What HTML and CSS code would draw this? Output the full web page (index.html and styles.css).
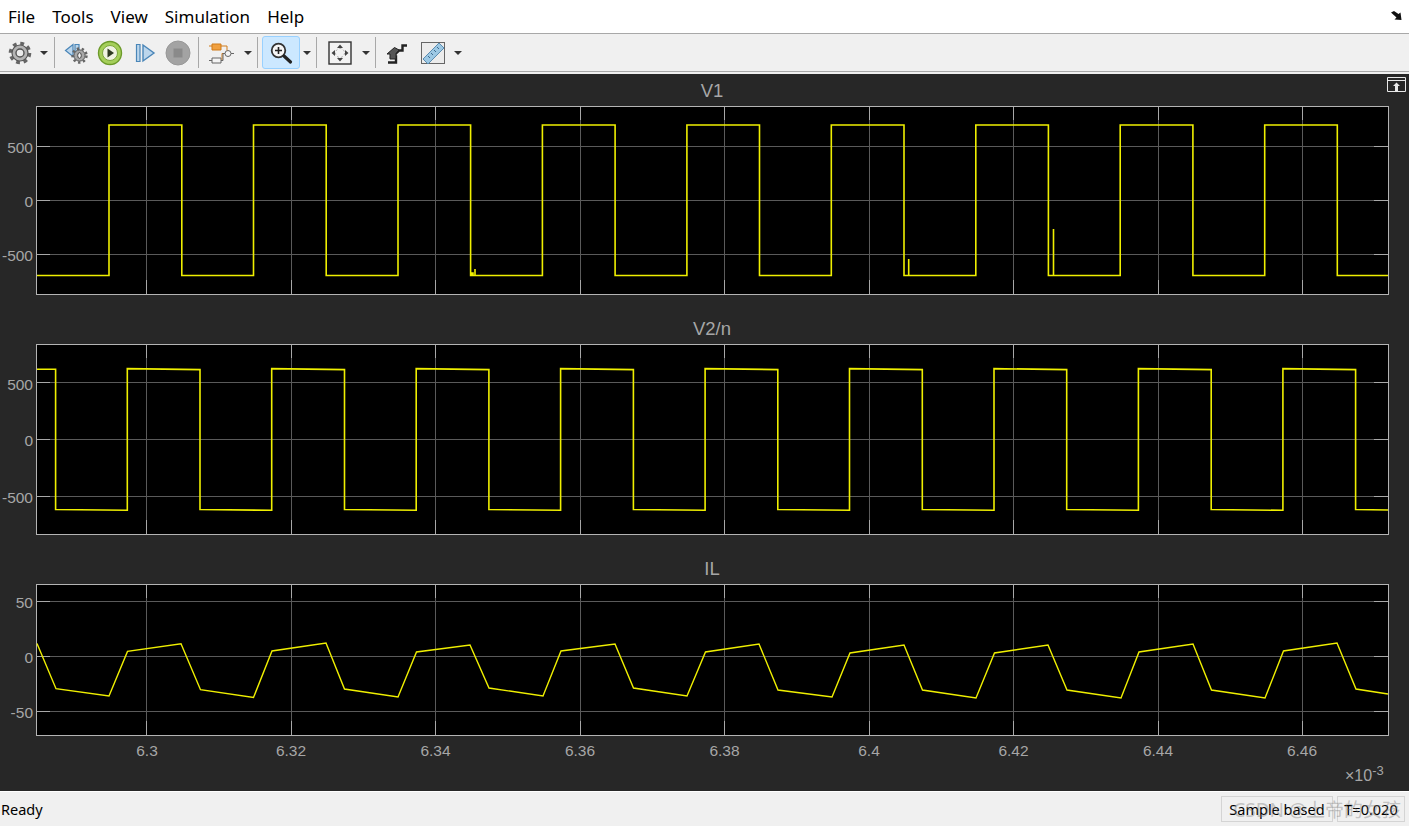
FILE: index.html
```html
<!DOCTYPE html>
<html lang="en">
<head>
  <meta charset="UTF-8" />
  <title>Scope</title>
  <link rel="stylesheet" href="styles.css">
</head>
<body>
  <header class="menubar">
    <nav class="menu">
      <a>File</a>
      <a>Tools</a>
      <a>View</a>
      <a>Simulation</a>
      <a>Help</a>
    </nav>
    <svg class="dock-arrow" width="14" height="12" viewBox="0 0 14 12">
      <path d="M1 2.5 4 1 8.5 4 10.5 2.5 11.5 10 4.5 9.5 6.5 7.5Z" fill="#111"/>
    </svg>
  </header>

  <div class="toolbar">
    <span class="tool gear">
      <svg width="24" height="24" viewBox="0 0 24 24">
        <circle cx="12" cy="12" r="9.6" fill="none" stroke="#666" stroke-width="3.4" stroke-dasharray="3.8 3.74"/>
        <circle cx="12" cy="12" r="8" fill="#b4b4b4" stroke="#555" stroke-width="1.2"/>
        <circle cx="12" cy="12" r="4" fill="#ececec" stroke="#555" stroke-width="1.4"/>
      </svg>
    </span>
    <span class="caret c16"></span>
    <span class="sep"></span>

    <span class="tool back">
      <svg width="26" height="24" viewBox="0 0 26 24">
        <path d="M1.5 9.5 9 3.5V15.5Z" fill="#bcd6ec" stroke="#4a86b8" stroke-width="1.2"/>
        <path d="M11 3.5H15V12H11Z" fill="#bcd6ec" stroke="#4a86b8" stroke-width="1.2"/>
        <circle cx="15.5" cy="14.5" r="7" fill="none" stroke="#666" stroke-width="2.4" stroke-dasharray="2.4 2.6"/>
        <circle cx="15.5" cy="14.5" r="5.6" fill="#a8a8a8" stroke="#555"/>
        <ellipse cx="15.5" cy="14.5" rx="1.8" ry="2.8" fill="#f2f2f2" stroke="#444"/>
      </svg>
    </span>
    <span class="tool play">
      <svg width="26" height="26" viewBox="0 0 26 26">
        <circle cx="13" cy="13" r="11.5" fill="#a5cf5a" stroke="#6c9a2a" stroke-width="1.4"/>
        <circle cx="13" cy="13" r="7.5" fill="#f0f3e2" stroke="#7da83c"/>
        <path d="M10.5 8.5 17 13 10.5 17.5Z" fill="#2f3a22"/>
      </svg>
    </span>
    <span class="tool step">
      <svg width="22" height="22" viewBox="0 0 22 22">
        <path d="M2.5 2.5H6V19.5H2.5Z" fill="#bcd6ec" stroke="#4a86b8" stroke-width="1.2"/>
        <path d="M9 3 20 11 9 19Z" fill="#bcd6ec" stroke="#4a86b8" stroke-width="1.4"/>
      </svg>
    </span>
    <span class="tool stop">
      <svg width="26" height="26" viewBox="0 0 26 26">
        <circle cx="13" cy="13" r="12" fill="#a3a3a3" stroke="#989898"/>
        <path d="M8.5 8.5H17.5V17.5H8.5Z" fill="#8a8a8a"/>
      </svg>
    </span>
    <span class="sep"></span>

    <span class="tool library">
      <svg width="26" height="24" viewBox="0 0 26 24">
        <path d="M3 3H12V9H3Z" fill="#f0a040" stroke="#d07a18"/>
        <path d="M3 17H12V22H3Z" fill="#f4f4f4" stroke="#666"/>
        <circle cx="19" cy="12.5" r="3" fill="#f4f4f4" stroke="#666"/>
        <path d="M12 5H18V9.5M22 12.5H25M16 12.5H13V19.5H12M0 5H3M0 19.5H3" fill="none" stroke="#d07a18"/>
        <path d="M22 12.5H25M16 12.5H14V19.5H12M0 19.5H3" fill="none" stroke="#666"/>
      </svg>
    </span>
    <span class="caret c14"></span>
    <span class="sep"></span>

    <span class="tool zoom">
      <svg width="24" height="24" viewBox="0 0 24 24">
        <circle cx="9.5" cy="9.5" r="6.8" fill="#f6f6f6" stroke="#333" stroke-width="1.8"/>
        <path d="M9.5 6V13M6 9.5H13" stroke="#222" stroke-width="1.6"/>
        <path d="M15 15 21.5 21" stroke="#222" stroke-width="3.2" stroke-linecap="round"/>
      </svg>
    </span>
    <span class="caret c14"></span>
    <span class="sep"></span>

    <span class="tool fit">
      <svg width="24" height="24" viewBox="0 0 24 24">
        <rect x="1" y="1" width="22" height="22" fill="#f2f2f2" stroke="#333" stroke-width="1.4"/>
        <path d="M12 3.5 15 7H9ZM12 20.5 15 17H9ZM3.5 12 7 9V15ZM20.5 12 17 9V15Z" fill="#444"/>
        <circle cx="12" cy="12" r="4.5" fill="none" stroke="#aaa" stroke-dasharray="2 2"/>
      </svg>
    </span>
    <span class="caret c14"></span>
    <span class="sep"></span>

    <span class="tool stairs">
      <svg width="24" height="24" viewBox="0 0 24 24">
        <path d="M3 21.5H11V15.5H7.5L14 9.5H17.5V4.5H22" fill="none" stroke="#222" stroke-width="2.4"/>
        <path d="M2 13 9.5 6.5 14 9 11 12.5V18H5V13Z" fill="#555" stroke="#222"/>
      </svg>
    </span>
    <span class="tool ruler">
      <svg width="24" height="24" viewBox="0 0 24 24">
        <rect x="0.5" y="1.5" width="23" height="21" fill="#ececec" stroke="#666"/>
        <path d="M2 18 18 2 23 7 7 23Z" fill="#9cc8e4" stroke="#5a8cb0"/>
        <path d="M7 15 9 17M10 12 12 14M13 9 15 11M16 6 18 8" stroke="#3d6c90"/>
      </svg>
    </span>
    <span class="caret c12"></span>
  </div>

  <main class="scope">
    <svg class="undock" width="19" height="15" viewBox="0 0 19 15">
      <path d="M0.5 0.5H18.5V14.5H0.5ZM0.5 3.5H18.5" fill="none" stroke="#e8e8e8"/>
      <path d="M9.5 5.5 13 9H11V14H8V9H6Z" fill="#e8e8e8"/>
    </svg>

    <section class="panel">
      <h2 class="panel-title">V1</h2>
      <svg class="axes" width="1409" height="189" viewBox="0 107 1409 189">
        <rect class="plot-bg" x="36.5" y="107.5" width="1352" height="188"/>
        <path class="grid" d="M146.5 107V295M291.5 107V295M435.5 107V295M580.5 107V295M724.5 107V295M869.5 107V295M1013.5 107V295M1158.5 107V295M1302.5 107V295M36 147.5H1388M36 201.5H1388M36 255.5H1388"/>
        <path class="tick" d="M36 147.5H50M36 201.5H50M36 255.5H50M1388 147.5H1374M1388 201.5H1374M1388 255.5H1374M146.5 107V121M291.5 107V121M435.5 107V121M580.5 107V121M724.5 107V121M869.5 107V121M1013.5 107V121M1158.5 107V121M1302.5 107V121M146.5 295V281M291.5 295V281M435.5 295V281M580.5 295V281M724.5 295V281M869.5 295V281M1013.5 295V281M1158.5 295V281M1302.5 295V281"/>
        <rect class="frame" x="36.5" y="107.5" width="1352" height="188"/>
        <path class="trace" d="M37 276.5H109V126H181.8V276.5H253.5V126H326.2V276.5H398V126H470.6V276.5H472V274H473V276.5H475V270M475 276.5H542.4V126H615.1V276.5H686.9V126H759.5V276.5H831.3V126H904V276.5H906.5V276.5H908.7V260M908.7 276.5H975.8V126H1048.4V276.5H1050.5V276.5H1053.5V230M1053.5 276.5H1120.2V126H1192.9V276.5H1264.7V126H1337.3V276.5H1388"/>
        <text class="ylabel" x="33" y="154">500</text>
        <text class="ylabel" x="33" y="208">0</text>
        <text class="ylabel" x="33" y="262">-500</text>
      </svg>
    </section>

    <section class="panel">
      <h2 class="panel-title">V2/n</h2>
      <svg class="axes" width="1409" height="191" viewBox="0 345 1409 191">
        <rect class="plot-bg" x="36.5" y="345.5" width="1352" height="190"/>
        <path class="grid" d="M146.5 345V535M291.5 345V535M435.5 345V535M580.5 345V535M724.5 345V535M869.5 345V535M1013.5 345V535M1158.5 345V535M1302.5 345V535M36 383.5H1388M36 440.5H1388M36 497.5H1388"/>
        <path class="tick" d="M36 383.5H50M36 440.5H50M36 497.5H50M1388 383.5H1374M1388 440.5H1374M1388 497.5H1374M146.5 345V359M291.5 345V359M435.5 345V359M580.5 345V359M724.5 345V359M869.5 345V359M1013.5 345V359M1158.5 345V359M1302.5 345V359M146.5 535V521M291.5 535V521M435.5 535V521M580.5 535V521M724.5 535V521M869.5 535V521M1013.5 535V521M1158.5 535V521M1302.5 535V521"/>
        <rect class="frame" x="36.5" y="345.5" width="1352" height="190"/>
        <path class="trace" d="M37 370.2H55.6V510.5L127.3 511.3V369.6L200 370.6V510.5L271.7 511.3V369.6L344.5 370.6V510.5L416.2 511.3V369.6L488.9 370.6V510.5L560.6 511.3V369.6L633.4 370.6V510.5L705.1 511.3V369.6L777.8 370.6V510.5L849.5 511.3V369.6L922.3 370.6V510.5L994 511.3V369.6L1066.7 370.6V510.5L1138.4 511.3V369.6L1211.2 370.6V510.5L1282.9 511.3V369.6L1355.6 370.6V510.5L1388 511"/>
        <text class="ylabel" x="33" y="391">500</text>
        <text class="ylabel" x="33" y="447">0</text>
        <text class="ylabel" x="33" y="504">-500</text>
      </svg>
    </section>

    <section class="panel">
      <h2 class="panel-title">IL</h2>
      <svg class="axes" width="1409" height="207" viewBox="0 584 1409 207">
        <rect class="plot-bg" x="36.5" y="584.5" width="1352" height="151"/>
        <path class="grid" d="M146.5 584V735M291.5 584V735M435.5 584V735M580.5 584V735M724.5 584V735M869.5 584V735M1013.5 584V735M1158.5 584V735M1302.5 584V735M36 601.5H1388M36 656.5H1388M36 711.5H1388"/>
        <path class="tick" d="M36 601.5H50M36 656.5H50M36 711.5H50M1388 601.5H1374M1388 656.5H1374M1388 711.5H1374M146.5 584V598M291.5 584V598M435.5 584V598M580.5 584V598M724.5 584V598M869.5 584V598M1013.5 584V598M1158.5 584V598M1302.5 584V598M146.5 735V721M291.5 735V721M435.5 735V721M580.5 735V721M724.5 735V721M869.5 735V721M1013.5 735V721M1158.5 735V721M1302.5 735V721"/>
        <rect class="frame" x="36.5" y="584.5" width="1352" height="151"/>
        <path class="trace thin" d="M37 643.5 56 688.7 109 696 127.5 651.4 181 643.7 200.5 689.7 253.5 697.5 272 651 326 643 344.5 689 398 697 416.5 652 470 645 489 688 543 696 561 651 615 644 633.5 688 687 696 705.5 652 759 644 778 690 832 697 850 653 904 645 922.5 690 976 698 994.5 653 1048 645 1067 690 1121 698 1139 652 1193 644 1211.5 690 1265 698 1283.5 651 1337 643 1356 689 1388 694"/>
        <text class="ylabel" x="33" y="608">50</text>
        <text class="ylabel" x="33" y="663">0</text>
        <text class="ylabel" x="33" y="718">-50</text>
        <text class="xlabel" x="147" y="756">6.3</text>
        <text class="xlabel" x="291" y="756">6.32</text>
        <text class="xlabel" x="435.5" y="756">6.34</text>
        <text class="xlabel" x="580" y="756">6.36</text>
        <text class="xlabel" x="724.5" y="756">6.38</text>
        <text class="xlabel" x="869" y="756">6.4</text>
        <text class="xlabel" x="1013.5" y="756">6.42</text>
        <text class="xlabel" x="1158" y="756">6.44</text>
        <text class="xlabel" x="1302" y="756">6.46</text>
        <text class="exponent" x="1345" y="781">×10<tspan class="exp-sup" dy="-6">-3</tspan></text>
      </svg>
    </section>
  </main>

  <footer class="statusbar">
    <span class="status-text">Ready</span>
    <span class="status-box sample">Sample based</span>
    <span class="status-box time">T=0.020</span>
    <span class="watermark">CSDN @上帝的女孩</span>
  </footer>
</body>
</html>
```

FILE: styles.css
```css
* {
  box-sizing: border-box;
  margin: 0;
  padding: 0;
}

html, body {
  height: 100%;
  overflow: hidden;
}

body {
  display: flex;
  flex-direction: column;
  background-color: #f0f0f0;
  font-family: "Noto Sans", "Liberation Sans", sans-serif;
  color: #000;
}

.menubar {
  display: flex;
  justify-content: space-between;
  align-items: center;
  height: 34px;
  padding: 0 5px 0 8px;
  background-color: #fff;
  border-bottom: 1px solid #a8a8a8;
}

.menu {
  display: flex;
  gap: 17px;
  font-size: 17px;
}

.toolbar {
  display: flex;
  align-items: center;
  height: 39px;
  padding-left: 3px;
  background-color: #f0f0f0;
  border-bottom: 1px solid #a8a8a8;
}

.tool {
  display: flex;
  justify-content: center;
  align-items: center;
  height: 33px;
}

.gear { width: 33px; }
.back { width: 36px; }
.play { width: 30px; }
.step { width: 39px; }
.stop { width: 28px; margin-right: 4px; }
.library { width: 38px; }
.fit { width: 38px; }
.stairs { width: 33px; }
.ruler { width: 39px; }

.zoom {
  width: 38px;
  background-color: #cce8ff;
  border: 1px solid #99d1ff;
  border-radius: 3px;
}

.caret {
  display: flex;
  justify-content: center;
}

.caret::after {
  content: "";
  border-left: 4px solid transparent;
  border-right: 4px solid transparent;
  border-top: 4px solid #333;
}

.c16 { width: 16px; }
.c14 { width: 14px; }
.c12 { width: 12px; }

.sep {
  width: 1px;
  height: 31px;
  margin: 0 4px 0 2px;
  background-color: #a8a8a8;
}

.scope {
  position: relative;
  flex: 1;
  margin-top: 2px;
  background-color: #272727;
  font-family: "Liberation Sans", sans-serif;
}

.undock {
  position: absolute;
  top: 3px;
  right: 3px;
}

.panel + .panel {
  margin-top: 17px;
}

.panel-title {
  height: 32px;
  margin-left: 36px;
  width: 1352px;
  padding-top: 6px;
  font-size: 18.5px;
  font-weight: normal;
  line-height: 22px;
  text-align: center;
  color: #a6a6a6;
}

.axes {
  display: block;
}

.plot-bg {
  fill: #000;
}

.grid {
  fill: none;
  stroke: #5a5a5a;
  stroke-width: 1;
}

.tick {
  fill: none;
  stroke: #a8a8a8;
  stroke-width: 1;
}

.frame {
  fill: none;
  stroke: #b4b4b4;
  stroke-width: 1;
}

.trace {
  fill: none;
  stroke: #efef00;
  stroke-width: 1.6;
}

.trace.thin {
  stroke-width: 1.4;
}

.ylabel,
.xlabel,
.exponent {
  font-size: 15.5px;
  fill: #a6a6a6;
}

.ylabel {
  text-anchor: end;
}

.xlabel {
  text-anchor: middle;
}

.exponent {
  font-size: 16px;
}

.exp-sup {
  font-size: 13px;
}

.statusbar {
  position: relative;
  display: flex;
  align-items: center;
  height: 35px;
  padding: 0 4px 0 1px;
  background-color: #f0f0f0;
  border-top: 1px solid #fff;
  font-size: 14.5px;
}

.status-text {
  flex: 1;
}

.status-box {
  display: flex;
  align-items: center;
  justify-content: center;
  height: 26px;
  border: 1px solid #d4d4d4;
}

.sample {
  width: 112px;
  margin-right: 4px;
}

.time {
  width: 68px;
}

.watermark {
  position: absolute;
  top: 3px;
  right: 8px;
  font-family: "Noto Sans", "Noto Sans CJK SC", sans-serif;
  font-size: 19px;
  color: rgba(120, 120, 120, 0.4);
}
```
